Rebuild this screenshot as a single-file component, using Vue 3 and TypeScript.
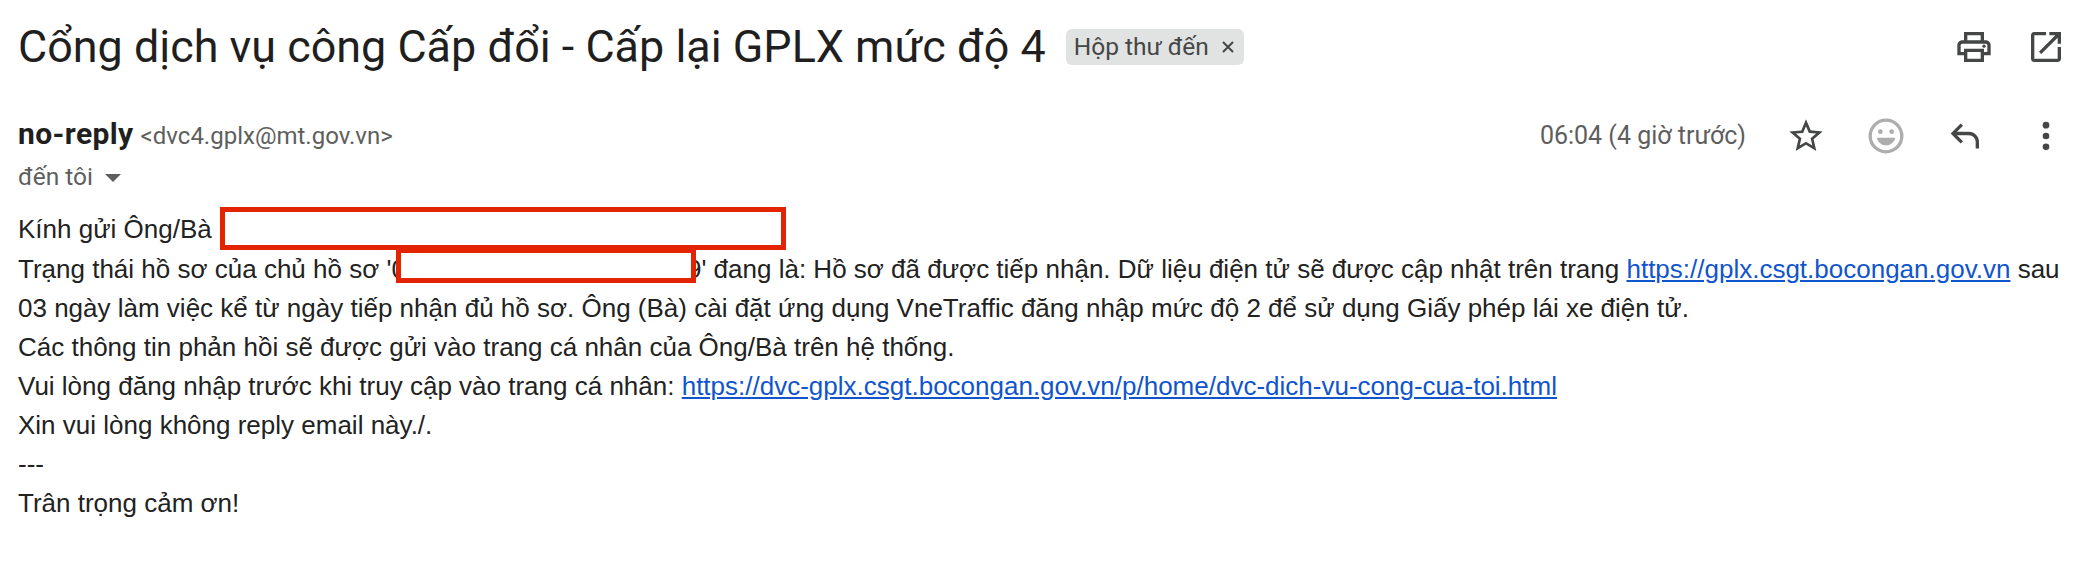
<script setup lang="ts">
const lines = {
  second: "' đang là: Hồ sơ đã được tiếp nhận. Dữ liệu điện tử sẽ được cập nhật trên trang ",
}
</script>

<template>
  <main class="mail">
    <header class="subject-row">
      <h1 class="subject">Cổng dịch vụ công Cấp đổi - Cấp lại GPLX mức độ 4</h1>
      <span class="chip">Hộp thư đến
        <svg class="chip-x" viewBox="0 0 12 12"><path d="M1 1l10 10M11 1L1 11" stroke="#444746" stroke-width="2" fill="none"/></svg>
      </span>
      <div class="top-actions">
        <svg class="icon" viewBox="0 0 24 24"><path d="M19 8h-1V3H6v5H5c-1.66 0-3 1.34-3 3v6h4v4h12v-4h4v-6c0-1.66-1.34-3-3-3zM8 5h8v3H8V5zm8 14H8v-4h8v4zm2-4v-2H6v2H4v-4c0-.55.45-1 1-1h14c.55 0 1 .45 1 1v4h-2z"/><circle cx="18" cy="11.5" r="1"/></svg>
        <svg class="icon" viewBox="0 0 24 24"><path d="M19 19H5V5h7V3H5c-1.11 0-2 .9-2 2v14c0 1.1.89 2 2 2h14c1.1 0 2-.9 2-2v-7h-2v7zM14 3v2h3.59l-9.83 9.83 1.41 1.41L19 6.41V10h2V3h-7z"/></svg>
      </div>
    </header>

    <section class="meta">
      <div class="sender">
        <div class="from"><strong class="name">no-reply</strong><span class="addr">&lt;dvc4.gplx@mt.gov.vn&gt;</span></div>
        <div class="to">đến tôi <span class="caret"></span></div>
      </div>
      <div class="meta-actions">
        <span class="time">06:04 (4 giờ trước)</span>
        <svg class="icon" viewBox="0 0 24 24"><path d="M22 9.24l-7.19-.62L12 2 9.19 8.63 2 9.24l5.46 4.73L5.82 21 12 17.27 18.18 21l-1.63-7.03L22 9.24zM12 15.4l-3.76 2.27 1-4.28-3.32-2.88 4.38-.38L12 6.1l1.71 4.04 4.38.38-3.32 2.88 1 4.28L12 15.4z"/></svg>
        <svg class="icon emoji" viewBox="0 0 24 24"><circle cx="12" cy="12" r="9.500" fill="none" stroke="#adadad" stroke-width="2"/><circle cx="8.600" cy="9.400" r="1.400" fill="#adadad"/><circle cx="15.400" cy="9.400" r="1.400" fill="#adadad"/><path fill="#adadad" d="M6.500 13h11c-.6 2.800-2.900 4.600-5.500 4.600S7.100 15.800 6.500 13z"/></svg>
        <svg class="icon reply" viewBox="0 0 24 24"><path d="M21 19.500h-2v-4c0-2.200-1.800-4-4-4H7.800l3.600 3.600L10 16.500 4 10.500l6-6 1.400 1.400-3.600 3.600H15c3.300 0 6 2.700 6 6v4z"/></svg>
        <svg class="icon" viewBox="0 0 24 24"><circle cx="12" cy="5.500" r="2"/><circle cx="12" cy="12" r="2"/><circle cx="12" cy="18.500" r="2"/></svg>
      </div>
    </section>

    <article class="body">
      <p>Kính gửi Ông/Bà <span class="redact redact-a"></span></p>
      <p class="second">Trạng thái hồ sơ của chủ hồ sơ '<span class="hidden-id"><span>0</span><span>9</span><span class="redact redact-b"></span></span>{{ lines.second }}<a href="#">https://gplx.csgt.bocongan.gov.vn</a> sau</p>
      <p>03 ngày làm việc kể từ ngày tiếp nhận đủ hồ sơ. Ông (Bà) cài đặt ứng dụng VneTraffic đăng nhập mức độ 2 để sử dụng Giấy phép lái xe điện tử.</p>
      <p>Các thông tin phản hồi sẽ được gửi vào trang cá nhân của Ông/Bà trên hệ thống.</p>
      <p>Vui lòng đăng nhập trước khi truy cập vào trang cá nhân: <a href="#">https://dvc-gplx.csgt.bocongan.gov.vn/p/home/dvc-dich-vu-cong-cua-toi.html</a></p>
      <p>Xin vui lòng không reply email này./.</p>
      <p>---</p>
      <p>Trân trọng cảm ơn!</p>
    </article>
  </main>
</template>

<style>
html, body { margin: 0; background: #fff; }
</style>

<style scoped>
.mail {
  width: 2084px;
  height: 564px;
  box-sizing: border-box;
  padding: 14px 0 0 18px;
  overflow: hidden;
  background: #fff;
  font-family: "Liberation Sans", Arial, sans-serif;
}
.subject-row { display: flex; align-items: center; height: 66px; padding-right: 18px; }
.subject {
  margin: 0;
  font: 400 44.900px/66px Roboto, sans-serif;
  color: #1f1f1f;
  white-space: nowrap;
}
.chip {
  display: inline-flex;
  align-items: center;
  margin-left: 20px;
  background: #e1e3e2;
  color: #444746;
  border-radius: 6px;
  padding: 0 10px 0 8px;
  height: 36px;
  font: 400 24.500px/36px Roboto, sans-serif;
  white-space: nowrap;
}
.chip-x { width: 12px; height: 12px; margin-left: 13px; }
.top-actions { margin-left: auto; display: flex; gap: 32px; }
.icon { width: 40px; height: 40px; fill: #444746; display: block; }
.reply { transform: translateX(-2px); }
.meta { display: flex; justify-content: space-between; padding: 36px 18px 0 0; }
.sender { margin-top: -1px; color: #5f6368; }
.from { display: flex; align-items: baseline; gap: 7px; }
.name { font: 700 30px/38px Roboto, sans-serif; letter-spacing: 0.4px; color: #1f1f1f; }
.addr { font: 400 24px/38px Roboto, sans-serif; color: #5e5e5e; }
.to { font: 400 24.500px/36px Roboto, sans-serif; margin-top: 4px; color: #5e5e5e; }
.caret { display: inline-block; width: 0; height: 0; border: 8px solid transparent; border-top: 8px solid #5e5e5e; border-bottom: 0; margin-left: 6px; vertical-align: 3px; }
.meta-actions { display: flex; align-items: center; gap: 40px; height: 40px; }
.time { font: 400 25px/40px Roboto, sans-serif; color: #5e5e5e; }
.body { margin-top: 12px; font-size: 26px; line-height: 39px; color: #222; white-space: nowrap; }
.body p { margin: 0; position: relative; }
.body a { color: #1155cc; text-decoration: underline; }
.redact-a {
  display: inline-block;
  width: 566px; height: 43px;
  box-sizing: border-box;
  border: 5px solid #e32400;
  vertical-align: -12px;
  margin-left: 1px;
}
.hidden-id { display: inline-flex; justify-content: space-between; width: 310px; position: relative; }
.redact-b {
  position: absolute;
  left: 5px; top: -2px;
  width: 300px; height: 35px;
  box-sizing: border-box;
  border: 5px solid #e32400;
  background: #fff;
}
</style>
